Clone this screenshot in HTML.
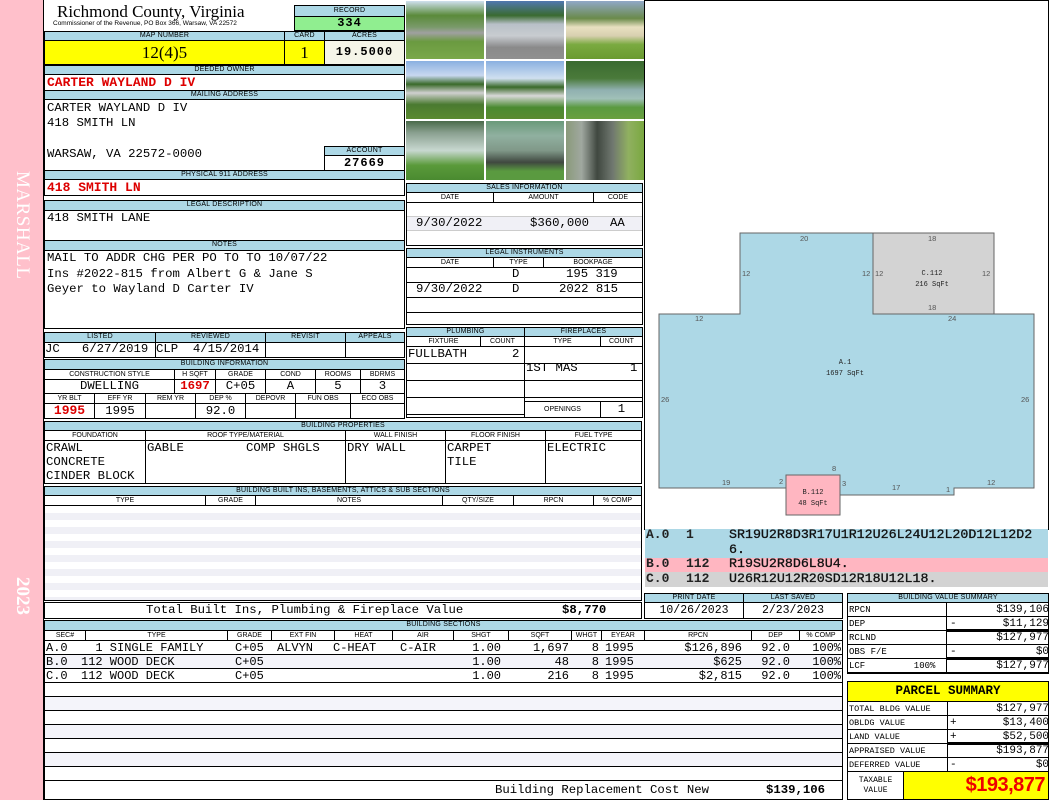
<!DOCTYPE html>
<html><head><meta charset="utf-8">
<style>
*{box-sizing:border-box;margin:0;padding:0}
body{width:1050px;height:800px;position:relative;background:#fff;overflow:hidden;font-family:"Liberation Mono",monospace;font-size:12.3px;color:#000}
div{position:absolute}
.b{border:1px solid #000;background:#fff}
.h{background:#add8e6;border:1px solid #000;font-family:"Liberation Sans",sans-serif;font-size:7px;text-align:center;line-height:8px;letter-spacing:0.2px}
.s{background:#fff;border:1px solid #000;font-family:"Liberation Sans",sans-serif;font-size:7px;text-align:center;line-height:9px}
.t{white-space:pre;line-height:15px}
.r{color:#d00;font-weight:bold}
.ph{border:1px solid #fff}
.cell{border:1px solid #000;background:#fff}
.rw{white-space:pre;line-height:14px;font-size:12px}
.ra{white-space:pre;line-height:14px;font-size:12px;text-align:right}
</style></head><body>
<div style="left:0;top:0;width:44px;height:800px;background:#ffc0cb"></div>
<div style="left:11px;top:171px;writing-mode:vertical-rl;font-family:'Liberation Serif',serif;font-size:19px;color:#fff;letter-spacing:0.5px">MARSHALL</div>
<div style="left:11px;top:577px;writing-mode:vertical-rl;font-family:'Liberation Serif',serif;font-size:19px;color:#fff;font-weight:bold">2023</div>
<div style="left:43px;top:0;width:1px;height:800px;background:#000"></div>

<div style="left:57px;top:2px;font-family:'Liberation Serif',serif;font-size:17px;line-height:20px">Richmond County, Virginia</div>
<div style="left:53px;top:20px;font-family:'Liberation Sans',sans-serif;font-size:6.5px;line-height:8px">Commissioner of the Revenue, PO Box 366, Warsaw, VA 22572</div>
<div class="h" style="left:294px;top:5px;width:111px;height:12px;line-height:10px">RECORD</div>
<div style="left:294px;top:16px;width:111px;height:15px;background:#90ee90;border:1px solid #000;text-align:center;font-weight:bold;font-size:12px;line-height:13px;letter-spacing:1px">334</div>

<div class="h" style="left:44px;top:31px;width:241px;height:10px">MAP NUMBER</div>
<div class="h" style="left:284px;top:31px;width:41px;height:10px">CARD</div>
<div class="h" style="left:324px;top:31px;width:81px;height:10px">ACRES</div>
<div style="left:44px;top:40px;width:241px;height:25px;background:#ffff00;border:1px solid #000;text-align:center;font-family:'Liberation Serif',serif;font-size:17px;line-height:23px">12(4)5</div>
<div style="left:284px;top:40px;width:41px;height:25px;background:#ffff00;border:1px solid #000;text-align:center;font-family:'Liberation Serif',serif;font-size:17px;line-height:23px">1</div>
<div style="left:324px;top:40px;width:81px;height:25px;background:#f5f5e8;border:1px solid #000;text-align:center;font-weight:bold;font-size:12px;line-height:23px;letter-spacing:1px">19.5000</div>

<div class="h" style="left:44px;top:65px;width:361px;height:10px">DEEDED OWNER</div>
<div class="b" style="left:44px;top:74px;width:361px;height:17px"></div>
<div class="t r" style="left:47px;top:75px;font-size:13px;line-height:15px">CARTER WAYLAND D IV</div>
<div class="h" style="left:44px;top:90px;width:361px;height:10px">MAILING ADDRESS</div>
<div class="b" style="left:44px;top:99px;width:361px;height:72px"></div>
<div class="t" style="left:47px;top:101px;line-height:15.2px">CARTER WAYLAND D IV
418 SMITH LN

WARSAW, VA 22572-0000</div>
<div class="h" style="left:324px;top:146px;width:81px;height:10px">ACCOUNT</div>
<div class="b" style="left:324px;top:155px;width:81px;height:16px;text-align:center;font-weight:bold;font-size:12px;line-height:14px;letter-spacing:1px">27669</div>
<div class="h" style="left:44px;top:170px;width:361px;height:10px">PHYSICAL 911 ADDRESS</div>
<div class="b" style="left:44px;top:179px;width:361px;height:17px"></div>
<div class="t r" style="left:47px;top:180px;font-size:13px;line-height:15px">418 SMITH LN</div>

<div class="h" style="left:44px;top:200px;width:361px;height:11px">LEGAL DESCRIPTION</div>
<div class="b" style="left:44px;top:210px;width:361px;height:31px"></div>
<div class="t" style="left:47px;top:211px">418 SMITH LANE</div>
<div class="h" style="left:44px;top:240px;width:361px;height:11px">NOTES</div>
<div class="b" style="left:44px;top:250px;width:361px;height:79px"></div>
<div class="t" style="left:47px;top:251px;line-height:15.5px">MAIL TO ADDR CHG PER PO TO TO 10/07/22
Ins #2022-815 from Albert G &amp; Jane S
Geyer to Wayland D Carter IV</div>

<div class="h" style="left:44px;top:332px;width:112px;height:11px">LISTED</div>
<div class="h" style="left:155px;top:332px;width:111px;height:11px">REVIEWED</div>
<div class="h" style="left:265px;top:332px;width:81px;height:11px">REVISIT</div>
<div class="h" style="left:345px;top:332px;width:60px;height:11px">APPEALS</div>
<div class="cell" style="left:44px;top:342px;width:112px;height:16px"></div>
<div class="cell" style="left:155px;top:342px;width:111px;height:16px"></div>
<div class="cell" style="left:265px;top:342px;width:81px;height:16px"></div>
<div class="cell" style="left:345px;top:342px;width:60px;height:16px"></div>
<div class="t" style="left:45px;top:342px">JC   6/27/2019</div>
<div class="t" style="left:156px;top:342px">CLP  4/15/2014</div>

<div class="h" style="left:44px;top:359px;width:361px;height:11px">BUILDING INFORMATION</div>
<div class="s" style="left:44px;top:369px;width:131px;height:11px">CONSTRUCTION STYLE</div>
<div class="s" style="left:174px;top:369px;width:42px;height:11px">H SQFT</div>
<div class="s" style="left:215px;top:369px;width:51px;height:11px">GRADE</div>
<div class="s" style="left:265px;top:369px;width:51px;height:11px">COND</div>
<div class="s" style="left:315px;top:369px;width:46px;height:11px">ROOMS</div>
<div class="s" style="left:360px;top:369px;width:45px;height:11px">BDRMS</div>
<div class="cell" style="left:44px;top:379px;width:131px;height:15px;text-align:center;line-height:13px">DWELLING</div>
<div class="cell r" style="left:174px;top:379px;width:42px;height:15px;text-align:center;line-height:13px">1697</div>
<div class="cell" style="left:215px;top:379px;width:51px;height:15px;text-align:center;line-height:13px">C+05</div>
<div class="cell" style="left:265px;top:379px;width:51px;height:15px;text-align:center;line-height:13px">A</div>
<div class="cell" style="left:315px;top:379px;width:46px;height:15px;text-align:center;line-height:13px">5</div>
<div class="cell" style="left:360px;top:379px;width:45px;height:15px;text-align:center;line-height:13px">3</div>
<div class="s" style="left:44px;top:393px;width:51px;height:11px">YR BLT</div>
<div class="s" style="left:94px;top:393px;width:52px;height:11px">EFF YR</div>
<div class="s" style="left:145px;top:393px;width:51px;height:11px">REM YR</div>
<div class="s" style="left:195px;top:393px;width:51px;height:11px">DEP %</div>
<div class="s" style="left:245px;top:393px;width:51px;height:11px">DEPOVR</div>
<div class="s" style="left:295px;top:393px;width:56px;height:11px">FUN OBS</div>
<div class="s" style="left:350px;top:393px;width:55px;height:11px">ECO OBS</div>
<div class="cell r" style="left:44px;top:403px;width:51px;height:16px;text-align:center;line-height:14px;font-size:13px">1995</div>
<div class="cell" style="left:94px;top:403px;width:52px;height:16px;text-align:center;line-height:14px">1995</div>
<div class="cell" style="left:145px;top:403px;width:51px;height:16px"></div>
<div class="cell" style="left:195px;top:403px;width:51px;height:16px;text-align:center;line-height:14px">92.0</div>
<div class="cell" style="left:245px;top:403px;width:51px;height:16px"></div>
<div class="cell" style="left:295px;top:403px;width:56px;height:16px"></div>
<div class="cell" style="left:350px;top:403px;width:55px;height:16px"></div>

<div class="h" style="left:44px;top:421px;width:598px;height:10px">BUILDING PROPERTIES</div>
<div class="s" style="left:44px;top:430px;width:102px;height:11px">FOUNDATION</div>
<div class="s" style="left:145px;top:430px;width:201px;height:11px">ROOF TYPE/MATERIAL</div>
<div class="s" style="left:345px;top:430px;width:101px;height:11px">WALL FINISH</div>
<div class="s" style="left:445px;top:430px;width:101px;height:11px">FLOOR FINISH</div>
<div class="s" style="left:545px;top:430px;width:97px;height:11px">FUEL TYPE</div>
<div class="cell" style="left:44px;top:440px;width:102px;height:44px"></div>
<div class="cell" style="left:145px;top:440px;width:201px;height:44px"></div>
<div class="cell" style="left:345px;top:440px;width:101px;height:44px"></div>
<div class="cell" style="left:445px;top:440px;width:101px;height:44px"></div>
<div class="cell" style="left:545px;top:440px;width:97px;height:44px"></div>
<div class="t" style="left:46px;top:441px;line-height:14px">CRAWL
CONCRETE
CINDER BLOCK</div>
<div class="t" style="left:147px;top:441px;line-height:14px">GABLE</div>
<div class="t" style="left:246px;top:441px;line-height:14px">COMP SHGLS</div>
<div class="t" style="left:347px;top:441px;line-height:14px">DRY WALL</div>
<div class="t" style="left:447px;top:441px;line-height:14px">CARPET
TILE</div>
<div class="t" style="left:547px;top:441px;line-height:14px">ELECTRIC</div>

<div class="h" style="left:44px;top:486px;width:598px;height:10px">BUILDING BUILT INS, BASEMENTS, ATTICS &amp; SUB SECTIONS</div>
<div class="s" style="left:44px;top:495px;width:162px;height:11px">TYPE</div>
<div class="s" style="left:205px;top:495px;width:51px;height:11px">GRADE</div>
<div class="s" style="left:255px;top:495px;width:188px;height:11px">NOTES</div>
<div class="s" style="left:442px;top:495px;width:72px;height:11px">QTY/SIZE</div>
<div class="s" style="left:513px;top:495px;width:81px;height:11px">RPCN</div>
<div class="s" style="left:593px;top:495px;width:49px;height:11px">% COMP</div>
<div class="b" style="left:44px;top:505px;width:598px;height:96px;background:repeating-linear-gradient(#fff 0,#fff 7px,#f0f0f6 7px,#f0f0f6 14px)"></div>
<div class="b" style="left:44px;top:602px;width:598px;height:17px"></div>
<div class="t" style="left:146px;top:603px;line-height:15px">Total Built Ins, Plumbing &amp; Fireplace Value</div>
<div class="t" style="left:562px;top:603px;line-height:15px;font-weight:bold">$8,770</div>

<div style="left:405px;top:0;width:240px;height:181px;background:#fff;border-right:1px solid #000"></div>
<div class="ph" style="left:405px;top:0;width:80px;height:60px;background:linear-gradient(#cfe0ee 0,#5a8a3a 25%,#7a9a6a 45%,#a0a0a0 55%,#6a9a40 70%,#7aa84a)"></div>
<div class="ph" style="left:485px;top:0;width:80px;height:60px;background:linear-gradient(#5078b0 0,#3a6a30 25%,#b8c0c8 40%,#c8ccd0 60%,#8a8a8a 80%,#909090)"></div>
<div class="ph" style="left:565px;top:0;width:80px;height:60px;background:linear-gradient(#90a8c8 0,#6a8a4a 30%,#e8e0c0 45%,#d8d0b0 60%,#7aaa40 75%,#6a9a30)"></div>
<div class="ph" style="left:405px;top:60px;width:80px;height:60px;background:linear-gradient(#8ab0e0 0,#c8d8f0 25%,#3a6a2a 40%,#d0d0d0 55%,#4a7a30 75%,#5a8a30)"></div>
<div class="ph" style="left:485px;top:60px;width:80px;height:60px;background:linear-gradient(#8ab0e0 0,#d0e0f0 30%,#3a6a2a 45%,#d8d8d8 60%,#4a8a30 80%,#5a8a30)"></div>
<div class="ph" style="left:565px;top:60px;width:80px;height:60px;background:linear-gradient(#3a6a30 0,#4a7a3a 30%,#90b0b0 50%,#a0c0b8 65%,#5a9a40 80%,#6aa040)"></div>
<div class="ph" style="left:405px;top:120px;width:80px;height:61px;background:linear-gradient(#4a6a4a 0,#8aa090 20%,#c8d8d0 50%,#5a9a3a 75%,#4a8a30)"></div>
<div class="ph" style="left:485px;top:120px;width:80px;height:61px;background:linear-gradient(#6a9a7a 0,#90b0a0 25%,#809888 50%,#404840 70%,#5a9a40 85%,#5a9a40)"></div>
<div class="ph" style="left:565px;top:120px;width:80px;height:61px;background:linear-gradient(90deg,#8a9a7a 0,#a0a8a0 20%,#404840 40%,#707870 60%,#90b060 80%,#7aa840)"></div>

<div class="h" style="left:406px;top:183px;width:237px;height:10px">SALES INFORMATION</div>
<div class="s" style="left:406px;top:192px;width:88px;height:11px">DATE</div>
<div class="s" style="left:493px;top:192px;width:101px;height:11px">AMOUNT</div>
<div class="s" style="left:593px;top:192px;width:50px;height:11px">CODE</div>
<div class="b" style="left:406px;top:202px;width:237px;height:44px"></div>
<div style="left:407px;top:216px;width:235px;height:15px;background:#f0f0f6;border-top:1px solid #ccc;border-bottom:1px solid #ccc"></div>
<div class="t" style="left:416px;top:216px">9/30/2022</div>
<div class="t" style="left:530px;top:216px">$360,000</div>
<div class="t" style="left:610px;top:216px">AA</div>
<div class="h" style="left:406px;top:248px;width:237px;height:10px">LEGAL INSTRUMENTS</div>
<div class="s" style="left:406px;top:257px;width:88px;height:11px">DATE</div>
<div class="s" style="left:493px;top:257px;width:51px;height:11px">TYPE</div>
<div class="s" style="left:543px;top:257px;width:100px;height:11px">BOOKPAGE</div>
<div class="b" style="left:406px;top:267px;width:237px;height:58px;background:repeating-linear-gradient(#fff 0,#fff 14px,#000 14px,#000 15px)"></div>
<div class="t" style="left:512px;top:267px">D
D</div>
<div class="t" style="left:416px;top:282px">9/30/2022</div>
<div class="t" style="left:566px;top:267px">195 319</div>
<div class="t" style="left:559px;top:282px">2022 815</div>

<div class="h" style="left:406px;top:327px;width:119px;height:10px">PLUMBING</div>
<div class="h" style="left:524px;top:327px;width:119px;height:10px">FIREPLACES</div>
<div class="s" style="left:406px;top:336px;width:75px;height:11px">FIXTURE</div>
<div class="s" style="left:480px;top:336px;width:45px;height:11px">COUNT</div>
<div class="s" style="left:524px;top:336px;width:77px;height:11px">TYPE</div>
<div class="s" style="left:600px;top:336px;width:43px;height:11px">COUNT</div>
<div class="b" style="left:406px;top:346px;width:119px;height:72px;background:repeating-linear-gradient(#fff 0,#fff 16px,#000 16px,#000 17px)"></div>
<div class="b" style="left:524px;top:346px;width:119px;height:72px;background:repeating-linear-gradient(#fff 0,#fff 16px,#000 16px,#000 17px)"></div>
<div class="cell" style="left:524px;top:401px;width:77px;height:17px;font-family:'Liberation Sans',sans-serif;font-size:7px;text-align:center;line-height:15px">OPENINGS</div>
<div class="cell" style="left:600px;top:401px;width:43px;height:17px;text-align:center;line-height:15px">1</div>
<div class="t" style="left:408px;top:347px">FULLBATH</div>
<div class="t" style="left:512px;top:347px">2</div>
<div class="t" style="left:526px;top:361px">1ST MAS</div>
<div class="t" style="left:630px;top:361px">1</div>

<div class="b" style="left:644px;top:0;width:405px;height:530px"></div>
<svg style="position:absolute;left:0;top:0" width="1050" height="800">
<polygon points="659,314 740,314 740,233 873,233 873,314 1034,314 1034,488 954,488 954,495 840,495 840,475 786,475 786,488 659,488" fill="#add8e6" stroke="#666" stroke-width="1"/>
<rect x="873" y="233" width="121" height="81" fill="#d3d3d3" stroke="#666"/>
<rect x="786" y="475" width="54" height="40" fill="#ffb6c1" stroke="#666"/>
<g font-family="Liberation Sans,sans-serif" font-size="7.5" fill="#555">
<text x="800" y="241">20</text><text x="928" y="241">18</text>
<text x="742" y="276">12</text><text x="862" y="276">12</text><text x="875" y="276">12</text><text x="982" y="276">12</text>
<text x="928" y="310">18</text><text x="948" y="321">24</text><text x="695" y="321">12</text>
<text x="661" y="402">26</text><text x="1021" y="402">26</text>
<text x="832" y="471">8</text><text x="779" y="484">2</text><text x="842" y="486">3</text>
<text x="722" y="485">19</text><text x="892" y="490">17</text><text x="946" y="492">1</text><text x="987" y="485">12</text>
</g>
<g font-family="Liberation Mono,monospace" font-size="7" fill="#222" text-anchor="middle">
<text x="845" y="364">A.1</text><text x="845" y="375">1697 SqFt</text>
<text x="932" y="275">C.112</text><text x="932" y="286">216 SqFt</text>
<text x="813" y="494">B.112</text><text x="813" y="505">48 SqFt</text>
</g>
</svg>
<div style="left:645px;top:529px;width:403px;height:29px;background:#add8e6"></div>
<div style="left:645px;top:558px;width:403px;height:14px;background:#ffb6c1"></div>
<div style="left:645px;top:572px;width:403px;height:15px;background:#d3d3d3"></div>
<div class="t" style="left:646px;top:528px;font-size:13px;font-weight:bold;line-height:14.7px;color:#222">A.0
 
B.0
C.0</div>
<div class="t" style="left:686px;top:528px;font-size:13px;font-weight:bold;line-height:14.7px;color:#222">1
 
112
112</div>
<div class="t" style="left:729px;top:528px;font-size:13.3px;line-height:14.7px;color:#111;-webkit-text-stroke:0.3px #111">SR19U2R8D3R17U1R12U26L24U12L20D12L12D2
6.
R19SU2R8D6L8U4.
U26R12U12R20SD12R18U12L18.</div>

<div class="h" style="left:644px;top:593px;width:100px;height:10px">PRINT DATE</div>
<div class="h" style="left:743px;top:593px;width:100px;height:10px">LAST SAVED</div>
<div class="cell" style="left:644px;top:602px;width:100px;height:17px;text-align:center;line-height:15px;font-size:11.5px">10/26/2023</div>
<div class="cell" style="left:743px;top:602px;width:100px;height:17px;text-align:center;line-height:15px;font-size:11.5px">2/23/2023</div>

<div class="h" style="left:847px;top:593px;width:202px;height:10px">BUILDING VALUE SUMMARY</div>
<div class="b" style="left:847px;top:602px;width:100px;height:72px;background:repeating-linear-gradient(#fff 0,#fff 13px,#000 13px,#000 14px)"></div>
<div class="b" style="left:946px;top:602px;width:103px;height:72px;background:repeating-linear-gradient(#fff 0,#fff 13px,#000 13px,#000 14px)"></div>
<div style="left:946px;top:629px;width:103px;height:3px;background:#000"></div>
<div style="left:946px;top:657px;width:103px;height:3px;background:#000"></div>
<div class="t" style="left:849px;top:603px;font-size:9px;line-height:14px">RPCN
DEP
RCLND
OBS F/E
LCF         100%</div>
<div class="t" style="left:950px;top:603px;font-size:11px;line-height:14px">       $139,106
-       $11,129
       $127,977
-            $0
       $127,977</div>

<div style="left:847px;top:681px;width:202px;height:21px;background:#ffff00;border:1px solid #000;text-align:center;font-family:'Liberation Mono',monospace;font-weight:bold;font-size:12.5px;line-height:19px">PARCEL SUMMARY</div>
<div class="b" style="left:847px;top:701px;width:101px;height:71px;background:repeating-linear-gradient(#fff 0,#fff 13px,#000 13px,#000 14px)"></div>
<div class="b" style="left:947px;top:701px;width:102px;height:71px;background:repeating-linear-gradient(#fff 0,#fff 13px,#000 13px,#000 14px)"></div>
<div style="left:947px;top:742px;width:102px;height:3px;background:#000"></div>
<div class="t" style="left:849px;top:702px;font-size:8.5px;line-height:14px">TOTAL BLDG VALUE
OBLDG VALUE
LAND VALUE
APPRAISED VALUE
DEFERRED VALUE</div>
<div class="t" style="left:950px;top:702px;font-size:11px;line-height:14px">       $127,977
+       $13,400
+       $52,500
       $193,877
-            $0</div>
<div class="b" style="left:847px;top:771px;width:57px;height:29px;font-size:8px;line-height:10px;text-align:center;padding-top:4px;white-space:pre">TAXABLE
VALUE</div>
<div style="left:903px;top:771px;width:146px;height:29px;background:#ffff00;border:1px solid #000;text-align:right;padding-right:3px;font-family:'Liberation Sans',sans-serif;font-weight:bold;color:#e00;font-size:20px;line-height:27px;letter-spacing:-0.5px">$193,877</div>

<div class="h" style="left:44px;top:620px;width:799px;height:11px">BUILDING SECTIONS</div>
<div class="s" style="left:44px;top:630px;width:42px;height:11px">SEC#</div>
<div class="s" style="left:85px;top:630px;width:143px;height:11px">TYPE</div>
<div class="s" style="left:227px;top:630px;width:45px;height:11px">GRADE</div>
<div class="s" style="left:271px;top:630px;width:64px;height:11px">EXT FIN</div>
<div class="s" style="left:334px;top:630px;width:59px;height:11px">HEAT</div>
<div class="s" style="left:392px;top:630px;width:62px;height:11px">AIR</div>
<div class="s" style="left:453px;top:630px;width:56px;height:11px">SHGT</div>
<div class="s" style="left:508px;top:630px;width:64px;height:11px">SQFT</div>
<div class="s" style="left:571px;top:630px;width:31px;height:11px">WHGT</div>
<div class="s" style="left:601px;top:630px;width:44px;height:11px">EYEAR</div>
<div class="s" style="left:644px;top:630px;width:108px;height:11px">RPCN</div>
<div class="s" style="left:751px;top:630px;width:49px;height:11px">DEP</div>
<div class="s" style="left:799px;top:630px;width:44px;height:11px">% COMP</div>
<div class="b" style="left:44px;top:640px;width:799px;height:160px;background:repeating-linear-gradient(#fff 0,#fff 13px,#000 13px,#000 14px)"></div>
<div style="left:45px;top:655px;width:797px;height:13px;background:#f4f4fa"></div>
<div style="left:45px;top:697px;width:797px;height:13px;background:#f4f4fa"></div>
<div style="left:45px;top:725px;width:797px;height:13px;background:#f4f4fa"></div>
<div style="left:45px;top:753px;width:797px;height:13px;background:#f4f4fa"></div>
<div style="left:45px;top:781px;width:797px;height:18px;background:#fff"></div>
<div class="rw" style="left:46px;top:641px">A.0
B.0
C.0</div>
<div class="rw" style="left:81px;top:641px">  1 SINGLE FAMILY
112 WOOD DECK
112 WOOD DECK</div>
<div class="rw" style="left:235px;top:641px">C+05
C+05
C+05</div>
<div class="rw" style="left:277px;top:641px">ALVYN</div>
<div class="rw" style="left:333px;top:641px">C-HEAT</div>
<div class="rw" style="left:400px;top:641px">C-AIR</div>
<div class="ra" style="left:440px;top:641px;width:61px">1.00
1.00
1.00</div>
<div class="ra" style="left:500px;top:641px;width:69px">1,697
48
216</div>
<div class="ra" style="left:570px;top:641px;width:29px">8
8
8</div>
<div class="rw" style="left:605px;top:641px">1995
1995
1995</div>
<div class="ra" style="left:650px;top:641px;width:92px">$126,896
$625
$2,815</div>
<div class="ra" style="left:750px;top:641px;width:40px">92.0
92.0
92.0</div>
<div class="ra" style="left:795px;top:641px;width:46px">100%
100%
100%</div>
<div class="t" style="left:495px;top:783px;line-height:15px">Building Replacement Cost New</div>
<div class="t" style="left:766px;top:783px;line-height:15px;font-weight:bold">$139,106</div>
</body></html>
